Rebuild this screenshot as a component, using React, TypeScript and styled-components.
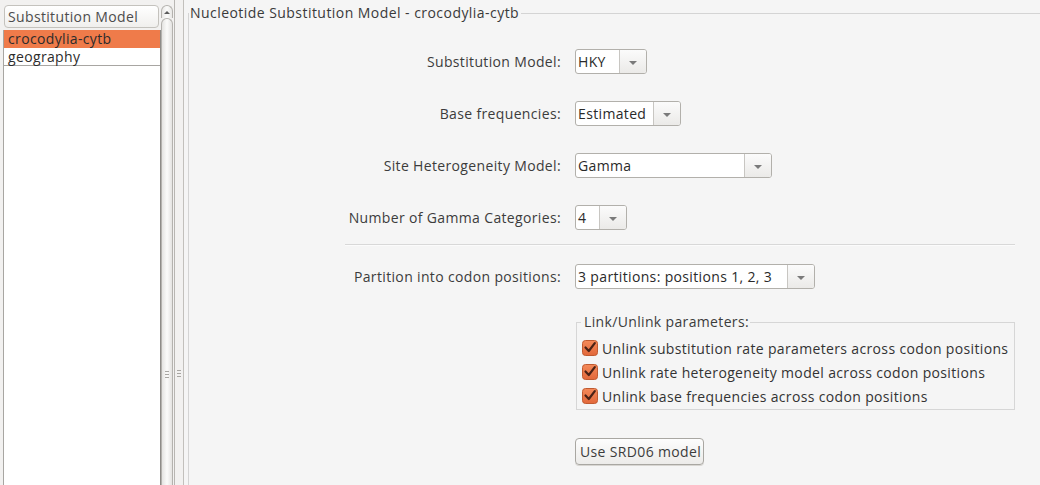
import React from 'react';
import styled, { createGlobalStyle } from 'styled-components';

const Global = createGlobalStyle`
  html, body { margin: 0; padding: 0; }
  body {
    width: 1040px; height: 485px; overflow: hidden;
    background: #f2f1f0;
    font-family: "Open Sans", "Liberation Sans", sans-serif;
    font-size: 14px;
    letter-spacing: 0.35px;
    color: #3c3c3c;
  }
`;

const Root = styled.div`
  display: flex;
  width: 1040px;
  height: 485px;
`;

const LeftPane = styled.div`
  width: 161px;
  box-sizing: border-box;
  padding: 5px 0 0 3px;
  display: flex;
  flex-direction: column;
  background: #f2f1f0;
`;

const HeaderButton = styled.div`
  height: 23px;
  margin: 0 2px 0 1px;
  box-sizing: border-box;
  border: 1px solid #c4c2bd;
  border-radius: 4px;
  background: linear-gradient(#ffffff, #f0efed);
  padding-left: 3px;
  line-height: 21px;
  font-size: 14px;
  color: #4c4c4c;
  white-space: nowrap;
  overflow: hidden;
`;

const ListBox = styled.div`
  flex: 1;
  margin-top: 2px;
  background: #ffffff;
  border-left: 1px solid #a8a6a2;
  border-right: 1px solid #8e8c88;
`;

const ListRow = styled.div<{ $selected?: boolean }>`
  height: 18px;
  box-sizing: border-box;
  line-height: 17px;
  padding-left: 4px;
  font-size: 14px;
  color: #2c2c2c;
  background: ${p => (p.$selected ? '#ef7b4a' : '#ffffff')};
  border-bottom: 1px solid ${p => (p.$selected ? '#ef7b4a' : '#a8a6a2')};
`;

const ScrollBar = styled.div`
  width: 12px;
  padding-top: 5px;
  display: flex;
  flex-direction: column;
  background: #f2f1f0;
`;

const ScrollUp = styled.div`
  height: 13px;
  box-sizing: border-box;
  border: 1px solid #b4b2ae;
  border-bottom: none;
  border-radius: 6px 6px 0 0;
  background: linear-gradient(90deg, #e8e7e5, #fbfbfa 50%, #e8e7e5);
  display: flex;
  align-items: center;
  justify-content: center;
`;

const ScrollThumb = styled.div`
  flex: 1;
  box-sizing: border-box;
  border: 1px solid #b4b2ae;
  border-bottom: none;
  border-radius: 6px 6px 0 0;
  background: linear-gradient(90deg, #e4e3e1, #fbfbfa 50%, #e4e3e1);
  display: flex;
  justify-content: center;
`;

const Divider = styled.div`
  width: 10px;
  box-sizing: border-box;
  border-left: 1px solid #b8b6b2;
  border-right: 1px solid #c2c0bc;
  background: #f2f1f0;
  display: flex;
  justify-content: center;
  margin-left: 1px;
`;

const Grip = styled.div<{ $top: number }>`
  display: flex;
  flex-direction: column;
  gap: 2px;
  margin-top: ${p => p.$top}px;
  & > span {
    width: 4px;
    height: 1px;
    background: #a8a6a2;
  }
`;

const RightPane = styled.div`
  flex: 1;
  background: #f5f5f5;
  padding: 3px 0 0 4px;
  display: flex;
`;

const TitledBox = styled.fieldset`
  flex: 1;
  margin: 0;
  padding: 0;
  border: none;
  border-top: 1px solid #d4d4d4;
  border-left: 1px solid #d4d4d4;
  min-width: 0;
`;

const Title = styled.legend`
  padding: 0 2px 0 1px;
  margin-left: 0;
  line-height: 20px;
  font-size: 14px;
  letter-spacing: 0.45px;
  color: #3a3a3a;
`;

const Form = styled.div`
  margin-left: 156px;
  width: 670px;
  display: flex;
  flex-direction: column;
`;

const FieldRow = styled.div<{ $top: number }>`
  display: grid;
  grid-template-columns: 216px 1fr;
  column-gap: 14px;
  align-items: center;
  margin-top: ${p => p.$top}px;
`;

const Label = styled.div`
  text-align: right;
  white-space: nowrap;
  color: #3c3c3c;
`;

const Combo = styled.div<{ $width: number }>`
  width: ${p => p.$width}px;
  height: 25px;
  box-sizing: border-box;
  border: 1px solid #b2b0ab;
  border-radius: 3px;
  display: flex;
  overflow: hidden;
  background: #fff;
`;

const ComboText = styled.div`
  flex: 1;
  padding-left: 2px;
  line-height: 23px;
  color: #2a2a2a;
  white-space: nowrap;
  overflow: hidden;
`;

const ComboArrow = styled.div`
  width: 26px;
  flex: none;
  border-left: 1px solid #c8c6c2;
  background: linear-gradient(#fbfbfb, #ebeae8);
  display: flex;
  align-items: center;
  justify-content: center;
  &::after {
    content: '';
    width: 0;
    height: 0;
    border-left: 4px solid transparent;
    border-right: 4px solid transparent;
    border-top: 4px solid #7a7a7a;
    margin-top: 2px;
  }
`;

const Separator = styled.div`
  margin-top: 14px;
  height: 0;
  border-top: 1px solid #d8d8d8;
  border-bottom: 1px solid #fbfbfb;
`;

const FieldCell = styled.div`
  grid-column: 2;
`;

const GroupBox = styled.fieldset`
  width: 439px;
  box-sizing: border-box;
  margin: 24px 0 0 1px;
  padding: 5px 0 1px 5px;
  border: 1px solid #d6d6d6;
  min-width: 0;
`;

const GroupTitle = styled.legend`
  padding: 0 1px 0 3px;
  margin-left: -1px;
  line-height: 18px;
  color: #3c3c3c;
`;

const CheckRow = styled.label`
  display: flex;
  align-items: center;
  gap: 4px;
  height: 24px;
  color: #333333;
  white-space: nowrap;
`;

const Button = styled.div`
  margin-top: 28px;
  width: 129px;
  height: 27px;
  box-sizing: border-box;
  border: 1px solid #a9a7a2;
  border-radius: 4px;
  background: linear-gradient(#fdfdfd, #ecebe9);
  box-shadow: 0 1px 0 #d8d6d2;
  line-height: 25px;
  padding-left: 4px;
  color: #3c3c3c;
  white-space: nowrap;
`;

const CheckIcon = () => (
  <svg width="16" height="16" viewBox="0 0 16 16">
    <defs>
      <linearGradient id="cbg" x1="0" y1="0" x2="0" y2="1">
        <stop offset="0" stopColor="#f48a5a" />
        <stop offset="1" stopColor="#e2683a" />
      </linearGradient>
    </defs>
    <rect x="0.5" y="0.5" width="15" height="15" rx="3" fill="url(#cbg)" stroke="#c05a30" />
    <path d="M3.5 7.5 L6.8 11 L12.8 3.2" fill="none" stroke="#4a2216" strokeWidth="2.2" strokeLinecap="round" strokeLinejoin="round" />
  </svg>
);

const ComboBox = ({ value, width }: { value: string; width: number }) => (
  <Combo $width={width}>
    <ComboText>{value}</ComboText>
    <ComboArrow />
  </Combo>
);

const UpArrow = styled.div`
  width: 0;
  height: 0;
  border-left: 3px solid transparent;
  border-right: 3px solid transparent;
  border-bottom: 3px solid #5a5a5a;
`;

const GripMarks = ({ top }: { top: number }) => (
  <Grip $top={top}>
    <span />
    <span />
    <span />
  </Grip>
);

export default function App() {
  const checks = [
    'Unlink substitution rate parameters across codon positions',
    'Unlink rate heterogeneity model across codon positions',
    'Unlink base frequencies across codon positions',
  ];
  return (
    <>
      <Global />
      <Root>
        <LeftPane>
          <HeaderButton>Substitution Model</HeaderButton>
          <ListBox>
            <ListRow $selected>crocodylia-cytb</ListRow>
            <ListRow>geography</ListRow>
          </ListBox>
        </LeftPane>
        <ScrollBar>
          <ScrollUp>
            <UpArrow />
          </ScrollUp>
          <ScrollThumb>
            <GripMarks top={352} />
          </ScrollThumb>
        </ScrollBar>
        <Divider>
          <GripMarks top={370} />
        </Divider>
        <RightPane>
          <TitledBox>
            <Title>Nucleotide Substitution Model - crocodylia-cytb</Title>
            <Form>
              <FieldRow $top={26}>
                <Label>Substitution Model:</Label>
                <ComboBox value="HKY" width={72} />
              </FieldRow>
              <FieldRow $top={27}>
                <Label>Base frequencies:</Label>
                <ComboBox value="Estimated" width={106} />
              </FieldRow>
              <FieldRow $top={27}>
                <Label>Site Heterogeneity Model:</Label>
                <ComboBox value="Gamma" width={197} />
              </FieldRow>
              <FieldRow $top={27}>
                <Label>Number of Gamma Categories:</Label>
                <ComboBox value="4" width={52} />
              </FieldRow>
              <Separator />
              <FieldRow $top={18}>
                <Label>Partition into codon positions:</Label>
                <ComboBox value="3 partitions: positions 1, 2, 3" width={240} />
              </FieldRow>
              <FieldRow $top={0}>
                <FieldCell>
                  <GroupBox>
                    <GroupTitle>Link/Unlink parameters:</GroupTitle>
                    {checks.map(c => (
                      <CheckRow key={c}>
                        <CheckIcon />
                        {c}
                      </CheckRow>
                    ))}
                  </GroupBox>
                  <Button>Use SRD06 model</Button>
                </FieldCell>
              </FieldRow>
            </Form>
          </TitledBox>
        </RightPane>
      </Root>
    </>
  );
}
